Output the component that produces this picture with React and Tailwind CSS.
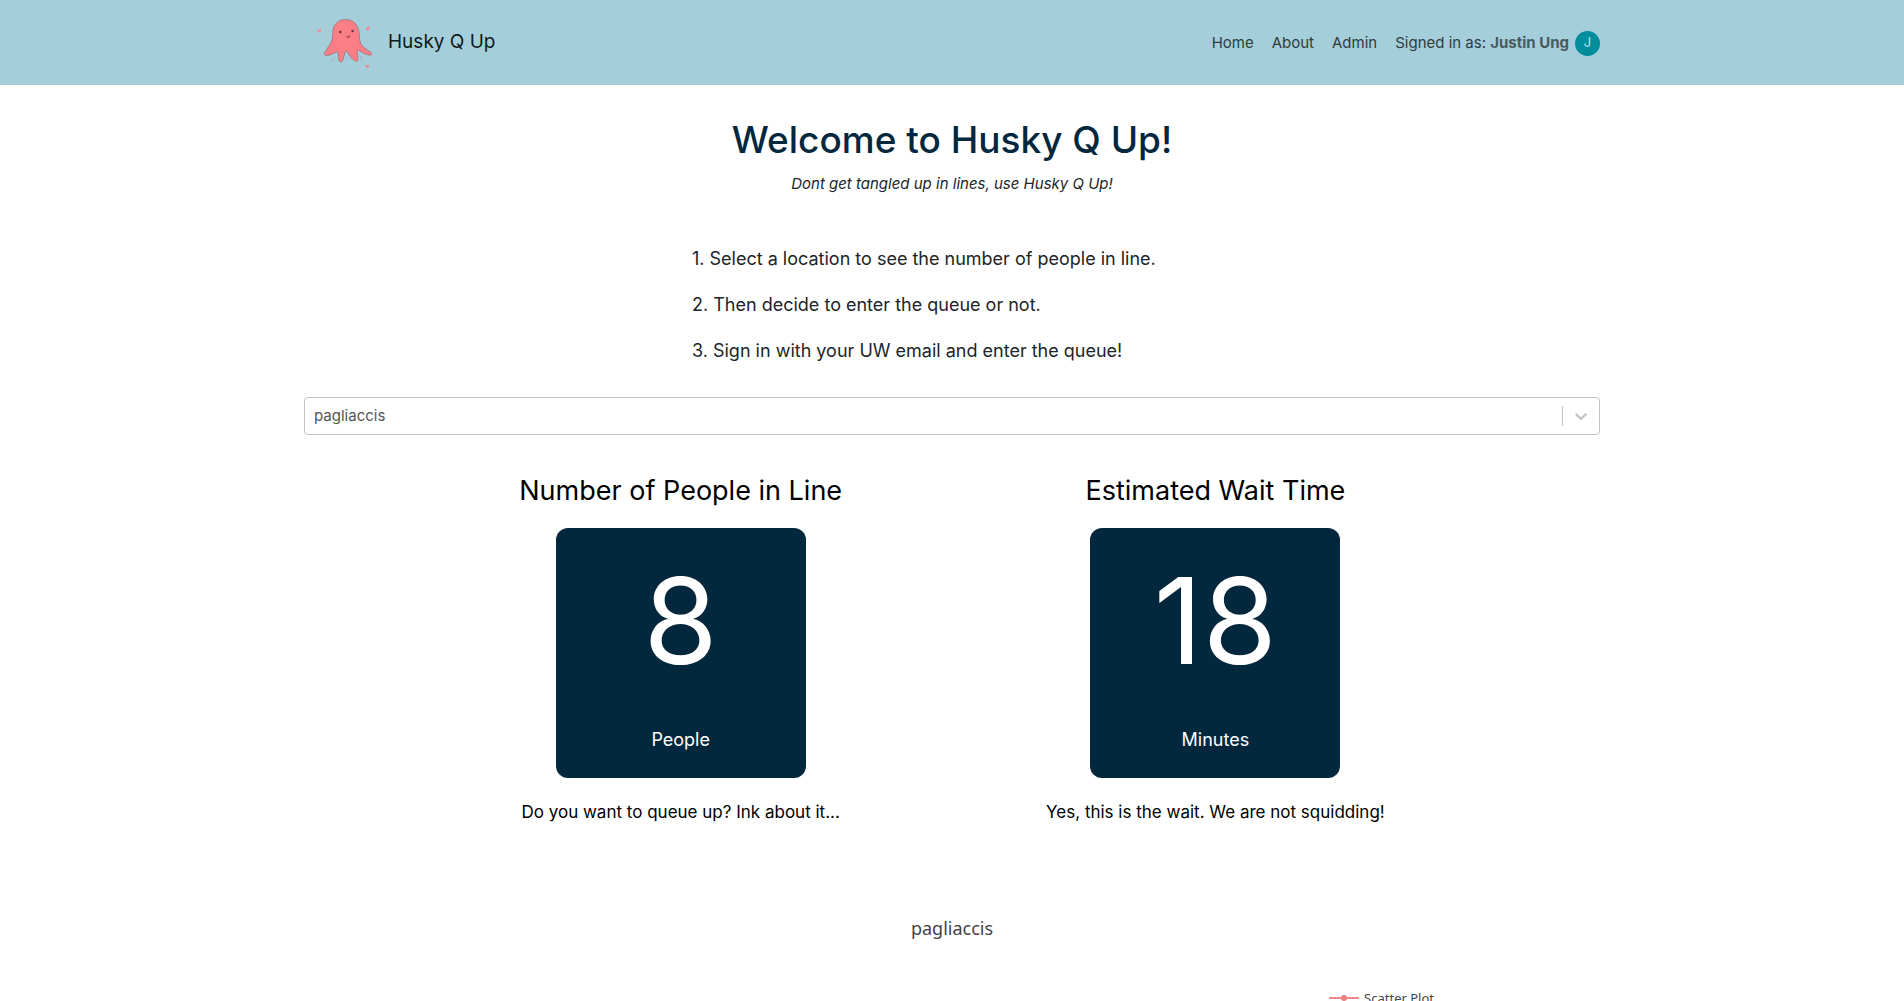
const PEOPLE = {
  title: "Number of People in Line",
  value: "8",
  unit: "People",
  note: "Do you want to queue up? Ink about it...",
};

const WAIT = {
  title: "Estimated Wait Time",
  value: "18",
  unit: "Minutes",
  note: "Yes, this is the wait. We are not squidding!",
};

function Squid() {
  return (
    <svg viewBox="312 12 66 60" className="h-[60px] w-[66px]" aria-hidden="true">
      <g stroke="#a9a6cf" strokeWidth="1" fill="none" strokeLinecap="round" opacity="0.8">
        <path d="M331 60l4-4M332.500 61l3-3M346 55l2 4M349 54l2 4M360 54l1 4M361.500 56l1 2" />
      </g>
      <path
        d="M345.500 18.500C338 18.500 333 24 332.800 31C332.700 36 332.500 39 330.500 42.500C328.800 45.500 326.500 48.500 324.700 51.500C323.500 54 325.500 55.300 328 54.500C331 53.600 334 52.300 336.300 51.200C337.600 50.700 338 51.300 338 52.500C338.100 55 338.300 57.500 339 59.500C339.700 61.700 342 61.500 342.600 59.500C343.500 56.800 344.300 53.500 345.300 50.800C345.700 49.700 346.500 49.700 347.100 50.700C349.300 54 351.500 57.200 354.500 59.700C356.500 61.200 358.400 60 358 57.500C357.600 55 357.200 52.500 357.200 50.500C357.300 49.300 358 49 359.200 49.700C362.500 51.600 366 53.500 369.500 54.200C371.800 54.500 372.300 52.600 370.700 51.300C367 48.500 362.500 46.500 360.700 42.500C359.300 39 359.600 35.500 359 31C358 23.500 353 18.500 345.500 18.500Z"
        fill="#fb7e86"
        stroke="#a3777f"
        strokeWidth="0.900"
      />
      <g fill="#5d3640">
        <circle cx="340.300" cy="31" r="1.200" />
        <circle cx="352.600" cy="30" r="1.200" />
      </g>
      <path d="M346.500 35.500c.5 1.500 2.500 1.500 3-.8" fill="none" stroke="#5d3640" strokeWidth="1" strokeLinecap="round" />
      <g fill="#f0888f">
        <path d="M317 29.500l1.500-1.200 1 .5 1.800-.5-.5 2-1 1.800z" />
        <path d="M365 26.500l2 .3 2.800-2-.6 3.200-.9 2.200z" />
        <path d="M364.500 64l2 .2 2.700-.2-.2 1.800-1 2z" />
      </g>
    </svg>
  );
}

function Stat({ title, value, unit, note }) {
  return (
    <section className="flex flex-col items-center text-black">
      <h2 className="text-[27px] leading-9">{title}</h2>
      <div className="mt-[19px] flex size-[250px] flex-col items-center rounded-xl bg-[#03283d] text-white">
        <p className="pt-5 text-[120px] leading-[146px]">{value}</p>
        <p className="mt-[31px] text-[18px] leading-[30px]">{unit}</p>
      </div>
      <p className="mt-5 text-[17px] leading-7">{note}</p>
    </section>
  );
}

export default function App() {
  return (
    <div className="bg-white font-['Inter',sans-serif] text-[#212529]">
      <header className="bg-[#a4ceda]">
        <div className="mx-auto flex h-[85px] max-w-[1296px] items-center justify-between">
          <a href="#home" className="flex items-center gap-[10px] pl-2 text-[19px] text-[#0f1a1d]">
            <Squid />
            <span>Husky Q Up</span>
          </a>
          <nav className="flex items-center gap-[18px] pt-px text-[15px] text-[#2f3c3f]">
            <a href="#home">Home</a>
            <a href="#about">About</a>
            <a href="#admin">Admin</a>
            <span className="flex items-center">
              Signed in as:&nbsp;<a href="#profile" className="font-bold text-[#485a5f]">Justin Ung</a>
              <span className="ml-[6px] flex size-[25px] items-center justify-center rounded-full bg-[#008e9c] text-[13px] text-[#b9e2e6]">J</span>
            </span>
          </nav>
        </div>
      </header>

      <main className="mx-auto max-w-[1296px]">
        <h1 className="mt-[31px] text-center text-[37px] font-medium leading-[48px] text-[#03283d]">Welcome to Husky Q Up!</h1>
        <p className="mt-2 text-center text-[15px] italic leading-6">Dont get tangled up in lines, use Husky Q Up!</p>

        <div className="mx-auto mt-12 flex w-[520px] flex-col gap-4 text-[18px] leading-[30px]">
          <p>1. Select a location to see the number of people in line.</p>
          <p>2. Then decide to enter the queue or not.</p>
          <p>3. Sign in with your UW email and enter the queue!</p>
        </div>

        <div className="relative mt-[31px]">
          <select aria-label="Location" className="block h-[38px] w-full appearance-none rounded border border-[#c4c4c4] bg-white px-[9px] text-[15px] text-[#555555]">
            <option>pagliaccis</option>
          </select>
          <div className="pointer-events-none absolute inset-y-0 right-px flex items-center">
            <span className="h-5 w-px bg-[#c4c4c4]" />
            <svg viewBox="0 0 20 20" className="mx-2 size-5 fill-[#c4c4c4]" aria-hidden="true">
              <path d="M4.516 7.548c0.436-0.446 1.043-0.481 1.576 0l3.908 3.747 3.908-3.747c0.533-0.481 1.141-0.446 1.574 0 0.436 0.445 0.408 1.197 0 1.615-0.406 0.418-4.695 4.502-4.695 4.502-0.217 0.223-0.502 0.335-0.787 0.335s-0.570-0.112-0.789-0.335c0 0-4.287-4.084-4.695-4.502s-0.436-1.170 0-1.615z" />
            </svg>
          </div>
        </div>

        <div className="mt-[38px] flex justify-center gap-[204px]">
          <Stat {...PEOPLE} />
          <Stat {...WAIT} />
        </div>

        <figure className="mt-[90px] font-['Noto_Sans',sans-serif] text-[#444444]">
          <figcaption className="text-center text-[18px] leading-6">pagliaccis</figcaption>
          <div className="mt-12 flex items-center justify-end gap-[5px] pr-[166px] text-[13px] leading-5">
            <svg viewBox="0 0 30 8" className="h-2 w-[30px]" aria-hidden="true">
              <path d="M0 4h30" stroke="#ee8a8a" strokeWidth="2" />
              <circle cx="15" cy="4" r="3" fill="#e88080" />
            </svg>
            <span>Scatter Plot</span>
          </div>
        </figure>
      </main>
    </div>
  );
}
